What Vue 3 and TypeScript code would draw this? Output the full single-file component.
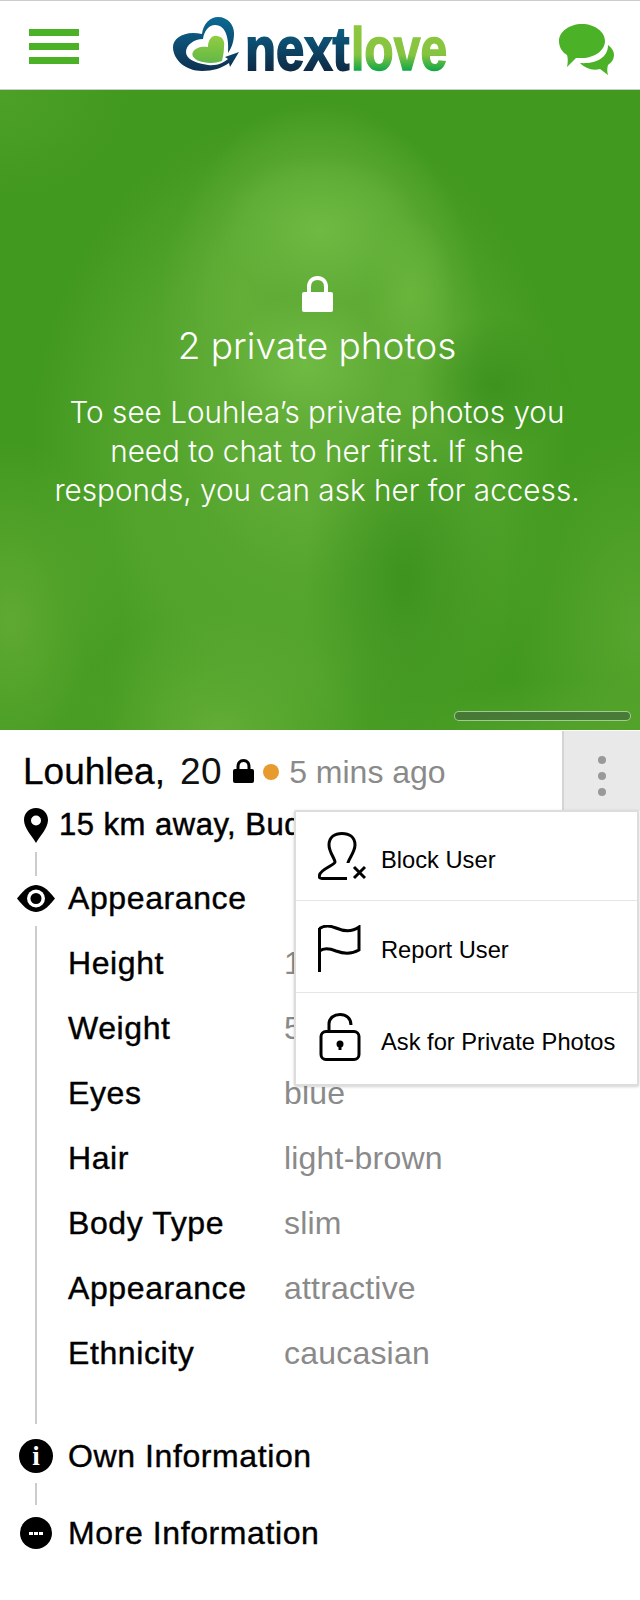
<script setup lang="ts">
interface Row { label: string; value: string }
const rows: Row[] = [
  { label: 'Height', value: '170 cm' },
  { label: 'Weight', value: '55 kg' },
  { label: 'Eyes', value: 'blue' },
  { label: 'Hair', value: 'light-brown' },
  { label: 'Body Type', value: 'slim' },
  { label: 'Appearance', value: 'attractive' },
  { label: 'Ethnicity', value: 'caucasian' },
]
</script>

<template>
  <div class="page">
    <header class="top">
      <div class="burger"><i></i><i></i><i></i></div>
      <svg class="logo" viewBox="170 5 280 80" width="280" height="80">
        <defs>
          <linearGradient id="blue" x1="0" y1="0" x2="0" y2="1">
            <stop offset="0" stop-color="#0b6a94" />
            <stop offset="1" stop-color="#0d3050" />
          </linearGradient>
          <linearGradient id="heart" x1="0" y1="0" x2="0" y2="1">
            <stop offset="0" stop-color="#92cd40" />
            <stop offset="1" stop-color="#62b848" />
          </linearGradient>
          <linearGradient id="nx" gradientUnits="userSpaceOnUse" x1="0" y1="-42" x2="0" y2="1">
            <stop offset="0" stop-color="#0b5f85" />
            <stop offset="1" stop-color="#0e2a45" />
          </linearGradient>
          <linearGradient id="lv" gradientUnits="userSpaceOnUse" x1="0" y1="-42" x2="0" y2="1">
            <stop offset="0" stop-color="#8dc63f" />
            <stop offset="0.62" stop-color="#86c440" />
            <stop offset="1" stop-color="#0fa648" />
          </linearGradient>
        </defs>
        <path fill="url(#blue)" d="M202 34C203 24 210 17 218 17C228 17 234 25 234 33C234 41 232 47 228 53C229 41 227 25 215 25C209 25 204 31 203 39C194 39 186 45 186 52C186 58 193 63 208 65C217 66 223 63 228 59L225 57L239 52L230 67L229 63C222 68 213 71 202 71C186 71 173 60 173 47C173 38 185 30 202 34Z" />
        <path fill="url(#heart)" d="M208 47C208 40 212 35 217 36C223 37 225 41 224 47C224 52 223 56 222 61C214 64 204 63 199 61C194 59 191 55 193 52C195 48 201 46 208 47Z" />
        <text class="wordmark" transform="translate(245 70) scale(.82 1)" fill="url(#nx)" stroke="url(#nx)" stroke-width="1.800">next</text>
        <text class="wordmark" transform="translate(351 70) scale(.775 1)" fill="url(#lv)" stroke="url(#lv)" stroke-width="1.500">love</text>
      </svg>
      <svg class="chat" viewBox="556 22 60 55" width="60" height="55">
        <path fill="#4bb227" d="M608 45C612 48 614 51 614 55C614 59 612 62 608 65C607 68 607 72 608 75L600 69C592 71 585 68 580 63C592 64 608 60 608 45Z" />
        <path fill="#4bb227" d="M582 24C595 24 605 32 605 41C605 50 595 58 582 58C580 58 578 58 576 58L567 67C568 63 568 58 567 55C562 52 559 47 559 41C559 32 569 24 582 24Z" />
      </svg>
    </header>

    <section class="hero">
      <svg class="hero-lock" viewBox="0 0 31 36" width="31" height="36">
        <path fill="none" stroke="#fff" stroke-width="4" d="M7 17V11C7 5.500 10.500 2 15.500 2C20.500 2 24 5.500 24 11V17" />
        <rect x="0" y="16" width="31" height="20" rx="2" fill="#fff" />
      </svg>
      <h2 class="hero-title">2 private photos</h2>
      <p class="hero-text">To see Louhlea’s private photos you<br />need to chat to her first. If she<br />responds, you can ask her for access.</p>
      <div class="slider"></div>
    </section>

    <section class="info">
      <div class="name-row">
        <span class="name">Louhlea,</span>
        <span class="age">20</span>
        <svg class="mini-lock" viewBox="0 0 21 24" width="21" height="24">
          <path fill="none" stroke="#000" stroke-width="3" d="M5 11V7.500C5 4 7 1.500 10.500 1.500C14 1.500 16 4 16 7.500V11" />
          <rect x="0" y="10" width="21" height="14" rx="2" fill="#000" />
        </svg>
        <span class="dot"></span>
        <span class="ago">5 mins ago</span>
      </div>
      <div class="row loc">
        <span class="ico">
          <svg viewBox="0 0 24 35" width="24" height="35">
            <path fill-rule="evenodd" d="M12 0C5 0 0 5 0 12C0 20 8 28 12 35C16 28 24 20 24 12C24 5 19 0 12 0ZM12 7.500A5 5 0 1 1 12 17.500A5 5 0 1 1 12 7.500Z" />
          </svg>
        </span>
        <span class="loc-text">15 km away, Budapest</span>
      </div>
      <div class="rail"></div>
      <div class="row head">
        <span class="ico">
          <svg viewBox="0 0 38 27" width="38" height="27">
            <path d="M0 13.500C8 3 14 0 19 0C24 0 30 3 38 13.500C30 24 24 27 19 27C14 27 8 24 0 13.500Z" />
            <circle cx="19" cy="13.500" r="9" fill="#fff" />
            <circle cx="19" cy="13.500" r="5.500" />
          </svg>
        </span>
        <span class="strong">Appearance</span>
      </div>
      <div class="details">
        <div v-for="r in rows" :key="r.label" class="detail">
          <span class="strong label">{{ r.label }}</span>
          <span class="value">{{ r.value }}</span>
        </div>
      </div>
      <div class="row head own">
        <span class="ico"><span class="badge big"><span class="i">i</span></span></span>
        <span class="strong">Own Information</span>
      </div>
      <div class="rail second"></div>
      <div class="row head more">
        <span class="ico"><span class="badge"><b></b><b></b><b></b></span></span>
        <span class="strong">More Information</span>
      </div>

      <div class="kebab"><i></i><i></i><i></i></div>

      <div class="menu">
        <div class="item first">
          <svg viewBox="0 0 48 48" width="48" height="48" class="mi">
            <path d="M30 31C30 28 37 20 37 13C37 5 31 1.500 24 1.500C17 1.500 11 5 11 13C11 20 17 27 17 30C17 33 3 37 1.500 43C1 46 2 46.500 4 46.500L29 46.500" />
            <path d="M36 35L47 46M47 35L36 46" />
          </svg>
          <span>Block User</span>
        </div>
        <div class="item second-item">
          <svg viewBox="0 0 48 48" width="48" height="48" class="mi">
            <path d="M1.500 3V47" />
            <path d="M1.500 3.500C6 0.500 12 0.500 18 3C25 6 34 7 41 2V25C34 29 26 29 18 26C12 23.500 6 22.500 1.500 26" />
          </svg>
          <span>Report User</span>
        </div>
        <div class="item third-item">
          <svg viewBox="0 0 48 48" width="48" height="48" class="mi">
            <rect x="3" y="18.500" width="38" height="28" rx="5" />
            <path d="M11 18V11C11 5 16 1.500 22 1.500C28 1.500 33 5 33 12" />
            <path d="M22 31V37" />
            <circle cx="22" cy="31" r="2" fill="#000" />
          </svg>
          <span>Ask for Private Photos</span>
        </div>
      </div>
    </section>
  </div>
</template>

<style>
html, body { margin: 0; background: #fff; }
</style>

<style scoped>
.page {
  width: 640px;
  height: 1600px;
  overflow: hidden;
  background: #fff;
  font-family: "Liberation Sans", Arial, sans-serif;
  color: #000;
}
.top {
  height: 88px;
  border-top: 1px solid #ccc;
  border-bottom: 1px solid #ccc;
  display: flex;
  align-items: flex-start;
  position: relative;
}
.burger {
  margin: 28px 0 0 29px;
  display: flex;
  flex-direction: column;
  gap: 7px;
}
.burger i { display: block; width: 50px; height: 7px; background: #4bb227; }
.logo { margin: 4px 0 0 91px; }
.wordmark { font: 700 62px "Liberation Sans", Arial, sans-serif; }
.chat { margin: 21px 0 0 106px; }

.hero {
  height: 640px;
  box-sizing: border-box;
  padding: 186px 6px 0 0;
  position: relative;
  display: flex;
  flex-direction: column;
  align-items: center;
  color: #fff;
  text-align: center;
  font-family: Inter, "Liberation Sans", sans-serif;
  font-weight: 300;
  background:
    radial-gradient(ellipse 80px 70px at 495px 295px, rgba(60,146,30,.95) 0%, rgba(60,146,30,0) 100%),
    radial-gradient(ellipse 100px 180px at 405px 490px, rgba(60,146,30,.95) 0%, rgba(60,146,30,0) 100%),
    radial-gradient(ellipse 100px 75px at 320px 140px, rgba(113,189,70,.85) 0%, rgba(113,189,70,0) 100%),
    radial-gradient(ellipse 85px 70px at 305px 275px, rgba(112,187,68,.95) 0%, rgba(112,187,68,0) 100%),
    radial-gradient(ellipse 45px 80px at 410px 205px, rgba(108,184,62,.8) 0%, rgba(108,184,62,0) 100%),
    radial-gradient(ellipse 45px 80px at 240px 210px, rgba(102,178,58,.6) 0%, rgba(102,178,58,0) 100%),
    radial-gradient(ellipse 165px 240px at 320px 250px, rgba(96,172,54,.95) 0%, rgba(96,172,54,.75) 70%, rgba(96,172,54,0) 100%),
    radial-gradient(ellipse 270px 340px at 300px 360px, rgba(92,170,52,.9) 0%, rgba(92,170,52,.6) 65%, rgba(92,170,52,0) 100%),
    radial-gradient(ellipse 150px 120px at 220px 640px, rgba(104,176,56,.9) 0%, rgba(104,176,56,0) 100%),
    radial-gradient(ellipse 110px 180px at 10px 530px, rgba(100,172,54,.85) 0%, rgba(100,172,54,0) 100%),
    radial-gradient(ellipse 130px 200px at 640px 540px, rgba(96,170,52,.7) 0%, rgba(96,170,52,0) 100%),
    radial-gradient(ellipse 200px 60px at 560px 650px, rgba(92,168,50,.6) 0%, rgba(92,168,50,0) 100%),
    radial-gradient(ellipse 130px 110px at 0px 0px, rgba(86,166,48,.55) 0%, rgba(86,166,48,0) 100%),
    #42991f;
}
.hero-lock { display: block; margin-left: 1px; }
.hero-title { margin: 12px 0 0; font-size: 37px; line-height: 44px; font-weight: 300; white-space: nowrap; }
.hero-text { margin: 25px 0 0; font-size: 29.700px; line-height: 39px; white-space: nowrap; }
.slider {
  position: absolute;
  left: 454px;
  top: 621px;
  width: 177px;
  height: 10px;
  box-sizing: border-box;
  border: 1px solid rgba(190,220,170,.8);
  border-radius: 5px;
  background: rgba(70,110,60,.75);
}

.info { position: relative; padding-top: 19px; }
.name-row { height: 46px; display: flex; align-items: center; padding-left: 23px; margin-bottom: 1px; }
.name { font-size: 37px; -webkit-text-stroke: .3px #000; }
.age { font-size: 37px; margin-left: 15px; color: #111; letter-spacing: .5px; }
.mini-lock { margin: -2px 0 0 11px; }
.dot { width: 16px; height: 16px; border-radius: 50%; background: #e79a2d; margin-left: 9px; }
.ago { font-size: 32px; color: #8a8a8a; margin-left: 10px; }

.row { display: flex; align-items: center; padding-left: 8px; }
.ico { width: 56px; margin-right: 4px; display: flex; justify-content: center; flex: none; }
.ico svg { display: block; }
.loc { height: 50px; margin-top: 5px; }
.loc .ico { width: 56px; margin-right: -5px; }
.loc-text { font-size: 31px; letter-spacing: .5px; -webkit-text-stroke: .5px #000; white-space: nowrap; }
.rail { width: 2px; height: 24px; background: #ccc; margin: 2px 0 0 35px; }
.head { height: 44px; }
.strong { font-size: 32px; letter-spacing: .6px; -webkit-text-stroke: .4px #000; white-space: nowrap; }
.details { margin: 6px 0 0 35px; border-left: 2px solid #ccc; padding: 5px 0 38px 31px; }
.detail { height: 65px; display: flex; align-items: center; }
.label { width: 216px; flex: none; }
.value { font-size: 32px; letter-spacing: .2px; color: #8a8a8a; white-space: nowrap; }
.own { margin-top: 10px; }
.rail.second { height: 22px; margin-top: 5px; }
.more { margin-top: 6px; }
.badge {
  width: 32px; height: 32px; border-radius: 50%; background: #000;
  display: flex; align-items: center; justify-content: center; gap: 1px;
}
.badge.big { width: 34px; height: 34px; }
.badge b { display: block; width: 4px; height: 3px; background: #fff; }
.i { color: #fff; font: 700 27px/34px "Liberation Serif", serif; }

.kebab {
  position: absolute;
  right: 0;
  top: 1px;
  width: 78px;
  height: 80px;
  box-sizing: border-box;
  background: #e9e9e9;
  border-left: 2px solid #d4d4d4;
  display: flex;
  flex-direction: column;
  align-items: center;
  padding-top: 25px;
  gap: 8px;
}
.kebab i { width: 8px; height: 8px; border-radius: 50%; background: #999; display: block; }
.menu {
  position: absolute;
  left: 294px;
  top: 80px;
  width: 345px;
  box-sizing: border-box;
  background: #fff;
  border: 2px solid #ddd;
  border-radius: 2px;
  box-shadow: 0 1px 3px rgba(0,0,0,.18);
}
.item {
  height: 92px;
  display: flex;
  align-items: center;
  box-sizing: border-box;
  padding: 8px 0 0 22px;
  gap: 15px;
  font-size: 23.700px;
  border-top: 1px solid #e6e6e6;
}
.item.first { border-top: 0; height: 88px; }
.item.first .mi { margin-top: -8px; }
.second-item .mi { margin-top: -4px; }
.third-item .mi { margin-top: -12px; }
.mi { fill: none; stroke: #000; stroke-width: 3; margin-top: -6px; }
</style>
